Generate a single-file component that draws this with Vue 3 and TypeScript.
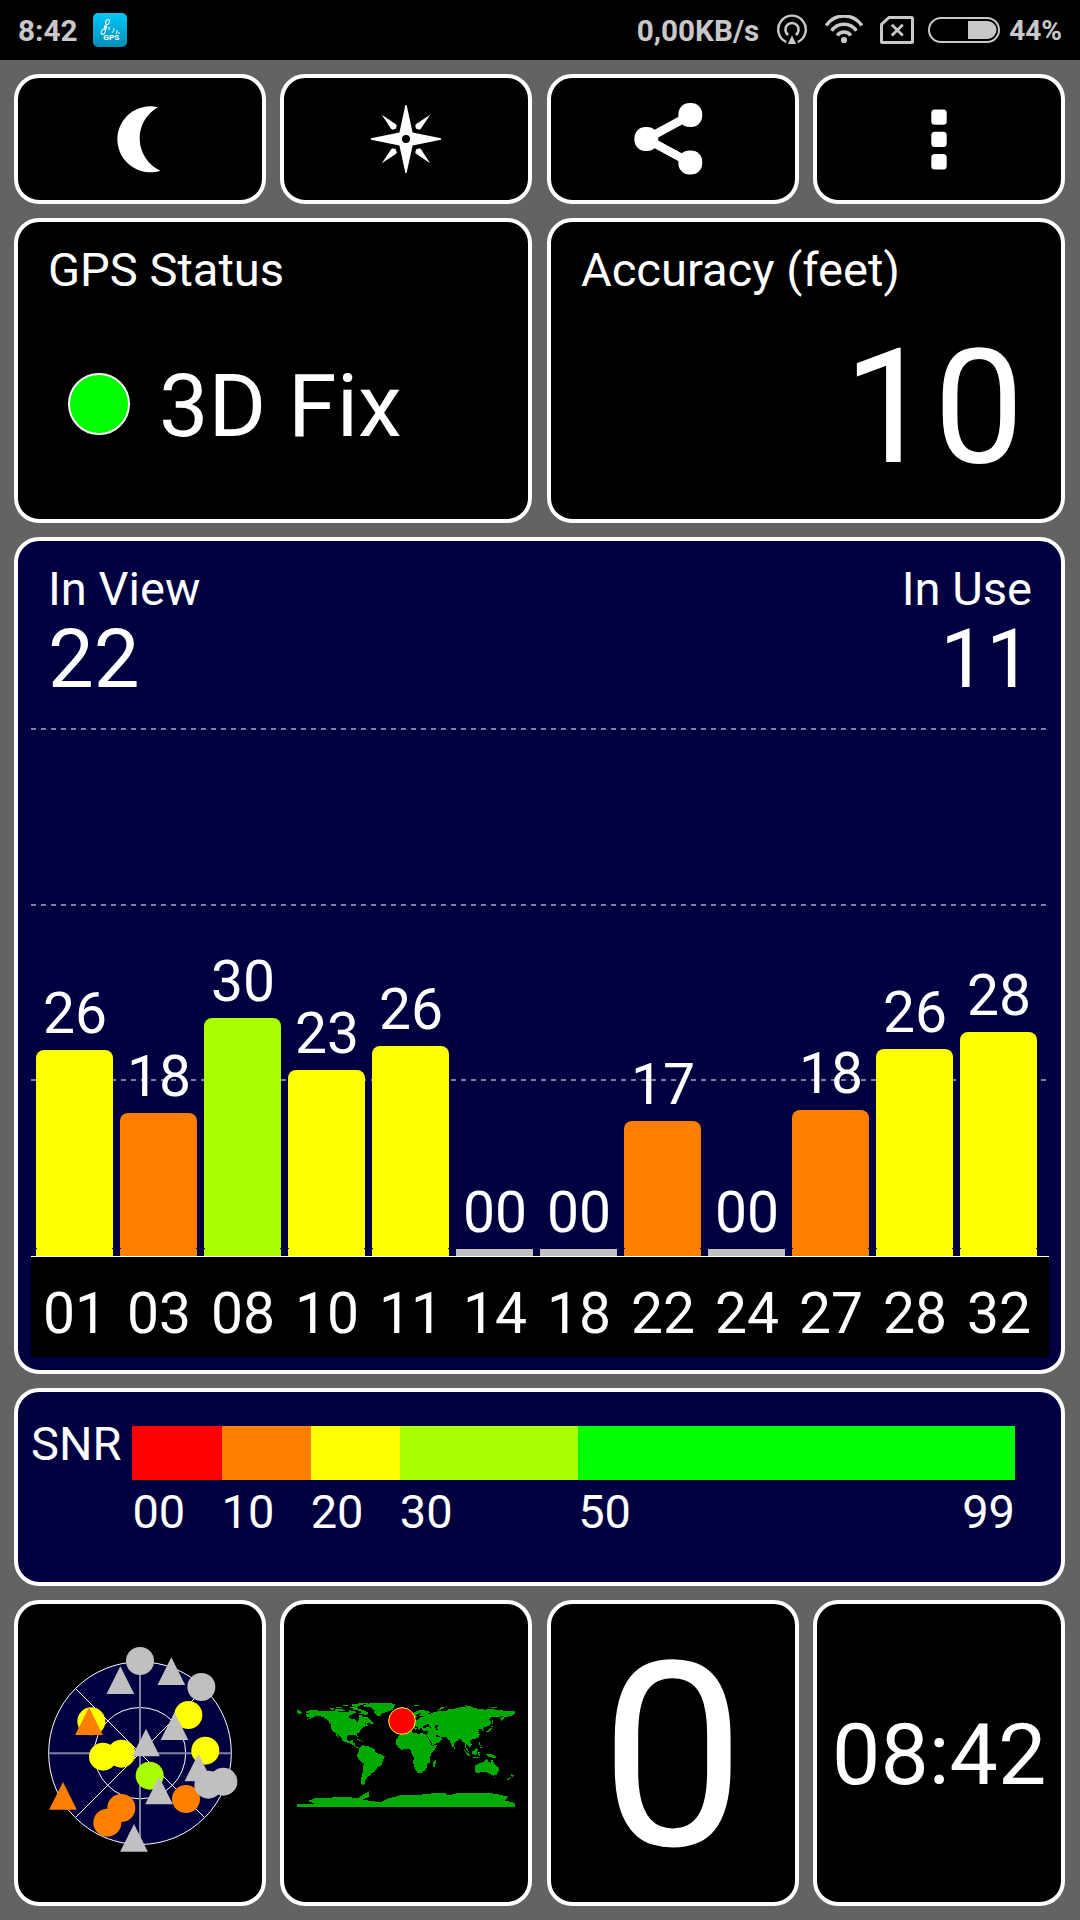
<script setup lang="ts">
interface Satellite {
  id: string
  snr: string
  height: number
  color: string
}

const YELLOW = '#ffff00'
const ORANGE = '#ff8000'
const LIME = '#aaff00'
const GREY = '#c0c0c0'

const satellites: Satellite[] = [
  { id: '01', snr: '26', height: 206, color: YELLOW },
  { id: '03', snr: '18', height: 143, color: ORANGE },
  { id: '08', snr: '30', height: 238, color: LIME },
  { id: '10', snr: '23', height: 186, color: YELLOW },
  { id: '11', snr: '26', height: 210, color: YELLOW },
  { id: '14', snr: '00', height: 7, color: GREY },
  { id: '18', snr: '00', height: 7, color: GREY },
  { id: '22', snr: '17', height: 135, color: ORANGE },
  { id: '24', snr: '00', height: 7, color: GREY },
  { id: '27', snr: '18', height: 146, color: ORANGE },
  { id: '28', snr: '26', height: 207, color: YELLOW },
  { id: '32', snr: '28', height: 224, color: YELLOW },
]

const snrScale = [
  { from: '00', color: '#ff0000' },
  { from: '10', color: ORANGE },
  { from: '20', color: YELLOW },
  { from: '30', color: LIME },
  { from: '50', to: '99', color: '#00ff00' },
]

type SkyMark = { shape: 'circle' | 'triangle'; x: number; y: number; color: string }

const skyMarks: SkyMark[] = [
  { shape: 'circle', x: 330, y: 63, color: GREY },
  { shape: 'circle', x: 514, y: 141, color: GREY },
  { shape: 'circle', x: 184, y: 244, color: YELLOW },
  { shape: 'circle', x: 475, y: 225, color: YELLOW },
  { shape: 'circle', x: 526, y: 332, color: YELLOW },
  { shape: 'circle', x: 219, y: 350, color: YELLOW },
  { shape: 'circle', x: 274, y: 341, color: YELLOW },
  { shape: 'circle', x: 359, y: 407, color: LIME },
  { shape: 'circle', x: 468, y: 477, color: ORANGE },
  { shape: 'circle', x: 274, y: 504, color: ORANGE },
  { shape: 'circle', x: 232, y: 548, color: ORANGE },
  { shape: 'circle', x: 535, y: 434, color: GREY },
  { shape: 'circle', x: 580, y: 425, color: GREY },
  { shape: 'triangle', x: 271, y: 79, color: GREY },
  { shape: 'triangle', x: 424, y: 52, color: GREY },
  { shape: 'triangle', x: 177, y: 202, color: ORANGE },
  { shape: 'triangle', x: 433.5, y: 217, color: GREY },
  { shape: 'triangle', x: 348, y: 266, color: GREY },
  { shape: 'triangle', x: 99, y: 426, color: ORANGE },
  { shape: 'triangle', x: 505, y: 341, color: GREY },
  { shape: 'triangle', x: 387, y: 410, color: GREY },
  { shape: 'triangle', x: 312, y: 552, color: GREY },
]

// Coastlines as longitude,latitude pairs.
const land: string[] = [
  '-168,66 -163,67 -166,68.5 -156,71 -141,69.6 -128,70 -115,68.5 -108,68 -95,68 -94,72 -90,69 -85,69.5 -82,67 -87,64.5 -94,61 -94.5,58.5 -92,57 -85,55.5 -82,53 -80,51.5 -79,54 -77,56 -78,60 -78,62.5 -73,62 -69,59 -65,60 -61,56 -56,52 -60,50 -66,50 -70,47 -65,48.5 -64,46 -60,46 -66,43.5 -70,43 -71,41.5 -75,39 -76,35 -81,31.5 -80,26 -82,28 -84,30 -89,30 -94,29.5 -97,27 -97.5,22 -95,18.5 -91,18.5 -90,21 -87,21.5 -88.5,16 -84,15.5 -83.5,11 -81,9 -78,9.5 -77,8 -80,7.5 -83,8.5 -86,11 -88,13 -94,16 -101,17.5 -105,20 -106,23 -112,29 -114.5,31.5 -112,27 -110,23 -115,28 -117,33 -121,35 -124,40 -124,47 -130,54 -135,58 -140,60 -147,61 -151,59.5 -157,56.5 -164,54.5 -158,58.5 -162,59 -165,61 -165,64 -161,65',
  '-72,78 -60,82 -45,82.5 -30,83 -18,80.5 -20,75 -22,71 -30,68.5 -40,65 -43,60 -49,62 -53,67 -52,70 -58,75 -68,76',
  '-88,73.5 -80,73.5 -70,70.5 -62,66.5 -66,62.5 -72,64 -78,65 -73,67.5 -79,70 -88,71',
  '-117,73 -105,73 -101,69.5 -112,68.5 -117,70',
  '-125,74 -118,74.5 -120,71 -125,72',
  '-90,80 -75,82.5 -62,82 -75,79 -80,76 -90,77',
  '-95,76.5 -80,75.5 -82,74.5 -92,74.5',
  '-117,76 -105,76 -107,74.7 -115,75',
  '-104,79 -96,80 -96,78 -103,77.5',
  '-100,73.5 -96,73 -98,71.5',
  '-59,50.5 -56,51.5 -53,48 -59,47.5',
  '-85,22 -80,23 -74,20 -78,20 -82,22',
  '-74,20 -68,19 -72,18',
  '-77,8 -72,12 -62,10.5 -52,5.5 -50,0 -44,-2.5 -35,-6 -38,-13 -40,-21 -47,-24.5 -49,-28 -53,-33 -58,-35 -57,-38 -62,-39 -65,-43 -67,-46 -68,-51 -69,-55 -74,-53 -75,-46 -73,-38 -71,-30 -70,-18 -76,-14 -81,-6 -80,-2 -77,4',
  '-6,35.5 10,37 11,33.5 20,31 25,32 33,31 35,27 38,20 43,11.5 51,12 48,5 41,-2 40,-10 40,-16 35,-20 35,-25 32,-29 26,-34 19,-34.5 15,-27 12,-17 13,-8 9,-1 9,4 4,6.5 -8,4.5 -13,8.5 -17,14.5 -16,22 -10,30',
  '44,-17 49.5,-12 50,-16 47,-25 44,-24',
  '-9,37 -9,43 -2,43.5 -1,46 -4,48.5 2,51 8,54 9,57 11,54 20,54.5 24,59 29,60 22,60.5 22,63 25,65.5 22,66 17,62 18,59.5 14,55.5 11,59 5,59 6,62 14,67 20,70 28,71 40,68 40,66 33,66.5 38,64 44,66 46,68 55,68.5 68,69 70,73 80,73 90,75.5 105,77.5 113,74 130,71.5 140,72.5 160,70 170,70 180,69 180,65 177,62.5 170,60 163,59 162,56 157,51 156,57 163,62 155,59.5 142,59 136,54.5 140,53 140,48 135,43.5 130,42.5 127,39.5 129,36 127,34.5 126,38 121,39.5 118,39 122,37 119,35 122,31 120,26 115,22.5 108,21.5 106,19 109,13 105,9 100,13.5 99,9 103,5 103.5,1.5 101,3 98,9 98,16 94,17 91,22.5 87,21.5 80,15.5 80,12 77.5,8 74,14 73,20 70,21 67,25 57,26.5 50,30 48,29.5 51,25 56,26 60,22.5 55,17 44,12.5 39,21 35,28 36,36 28,36.5 26,40 35,42 42,41.5 37,47 31,46 28,44 28,41 23,40 22,37 19,42 13,45.5 16,41 18,40 16,38 10,44 3,43 0,40 -2,37 -5,36',
  '12,79.5 25,80 20,77.5 15,77.5',
  '52,71 57,71 68,77 58,75',
  '95,80 105,79 98,78',
  '138,75.5 150,75 143,74',
  '130,33 132,34 136,34 140,36 142,40 140,41 136,37',
  '140,42 145,43.5 142,45.5',
  '142,46 144,50 143,54 142,50',
  '120,23 122,25 121,22',
  '120,18 122,18 122,14 124,12 126,7 122,7 124,10 120,14',
  '95,5.5 104,-2 106,-6 102,-5',
  '105,-6.5 115,-8 124,-8.5 124,-9.5 114,-9 106,-7.5',
  '109,1.5 117,7 119,5 116,-4 110,-3',
  '120,1 125,1.5 121,-1 123,-5 120,-5 119,-2',
  '131,-1 135,-3.5 141,-2.5 148,-6 150,-10 143,-8.5 138,-8 133,-4',
  '80,9 82,7 80,6',
  '114,-22 122,-18 129,-15 132,-11.5 136,-12 136,-15 140,-17.5 142,-11 146,-19 153,-25 153,-31 150,-37.5 144,-38.5 139,-36 136,-34 131,-31.5 124,-33 118,-35 115,-34',
  '145,-41 148,-41 147,-43.5',
  '173,-35 178,-38 175,-41.5 174,-39',
  '172.5,-41 174,-42 168,-46.5 167,-45',
]
</script>

<template>
  <div class="screen">
    <header class="status">
      <span class="clock">8:42</span>
      <svg class="app" width="34" height="34" viewBox="0 0 34 34">
        <defs>
          <linearGradient id="sky" x1="0" y1="0" x2="0" y2="1">
            <stop offset="0" stop-color="#00c8f8" />
            <stop offset="1" stop-color="#008fb8" />
          </linearGradient>
        </defs>
        <rect width="34" height="34" rx="5" fill="url(#sky)" />
        <g fill="none" stroke="#fff" stroke-width="1">
          <ellipse cx="14.5" cy="9" rx="1.8" ry="2.6" transform="rotate(20 14.5 9)" />
          <ellipse cx="10.3" cy="18.7" rx="1.8" ry="2.8" transform="rotate(25 10.3 18.7)" />
          <path d="M12 12l2 2-2 3M19 20q2.200-2 2-5M23 21q1.500-2 1-4M26 21v-2M16 14v3" />
        </g>
        <circle cx="12.500" cy="14" r="1.800" fill="#fff" />
        <text x="18.300" y="27.300" text-anchor="middle" class="app-text" textLength="16" lengthAdjust="spacingAndGlyphs">GPS</text>
      </svg>
      <span class="grow"></span>
      <span class="rate">0,00KB/s</span>
      <svg class="hotspot" width="32" height="32" viewBox="0 0 32 32" fill="none" stroke="#c8c8c8">
        <path d="M10.300 28A13.800 13.800 0 1 1 21.700 28" stroke-width="2.400" />
        <path d="M12.200 21A6.600 6.600 0 1 1 19.800 21" stroke-width="2.600" />
        <path d="M16 21.500L20.200 30H11.800Z" fill="#c8c8c8" stroke="none" />
      </svg>
      <svg class="wifi" width="40" height="30" viewBox="0 0 40 30" fill="none" stroke="#c8c8c8" stroke-width="3.400">
        <path d="M2.200 10.500A21.500 21.500 0 0 1 37.800 10.500" />
        <path d="M7.600 15.800A15 15 0 0 1 32.400 15.800" />
        <path d="M13.200 20.400A8.500 8.500 0 0 1 26.800 20.400" />
        <circle cx="20" cy="25" r="3.100" fill="#c8c8c8" stroke="none" />
      </svg>
      <svg class="sim" width="34" height="28" viewBox="0 0 34 28" fill="none" stroke="#c8c8c8">
        <path d="M9 1.500H31.500a1 1 0 0 1 1 1V25.500a1 1 0 0 1-1 1H2.500a1 1 0 0 1-1-1V8.500Z" stroke-width="3" />
        <path d="M11.800 8.700L22.800 19.600M22.800 8.700L11.800 19.600" stroke-width="2.800" />
      </svg>
      <svg class="battery" width="72" height="26" viewBox="0 0 72 26">
        <rect x="1" y="1" width="70" height="24" rx="12" fill="none" stroke="#c8c8c8" stroke-width="2" />
        <path d="M40 4H59.500a9 9 0 0 1 0 18H40Z" fill="#c8c8c8" />
      </svg>
      <span class="percent">44%</span>
    </header>

    <main class="board">
      <div class="row tools">
        <button class="card" aria-label="Night mode">
          <svg width="90" height="90" viewBox="95 94 90 90" fill="#fff">
            <path d="M158 107.200A33 33 0 1 0 160.500 170.700A35.600 35.600 0 0 1 158 107.200Z" />
          </svg>
        </button>
        <button class="card" aria-label="Compass">
          <svg width="90" height="90" viewBox="-45 -45 90 90" fill="#fff">
            <path fill-rule="evenodd" d="M-.6-34H.6L6.600-6.400L35-.7V.7L6.600 6.400L.6 34H-.6L-6.600 6.400L-35 .7V-.7L-6.600-6.400ZM-4 0A4 4 0 1 0 4 0A4 4 0 1 0-4 0Z" />
            <path v-for="a in [0, 90, 180, 270]" :key="a" :transform="`rotate(${a})`" d="M-24.200-24.200L-10.500-15L-9.200-13.500L-10.200-10.200L-13.500-9.200L-15-10.200Z" />
          </svg>
        </button>
        <button class="card" aria-label="Share">
          <svg width="90" height="90" viewBox="627.500 94 90 90" fill="#fff" stroke="#fff">
            <path d="M689.800 115.300L646 139L689.800 162.700" fill="none" stroke-width="8.500" />
            <g stroke="none">
              <rect x="677.900" y="103" width="23.800" height="24" rx="11" />
              <rect x="633.900" y="127" width="23.800" height="24" rx="11" />
              <rect x="677.900" y="150.500" width="23.800" height="24" rx="11" />
            </g>
          </svg>
        </button>
        <button class="card" aria-label="Menu">
          <svg width="90" height="90" viewBox="894 94 90 90" fill="#fff">
            <rect x="931.300" y="109.400" width="15.400" height="15.300" rx="3.500" />
            <rect x="931.300" y="131.800" width="15.400" height="15.300" rx="3.500" />
            <rect x="931.300" y="154.100" width="15.400" height="15.300" rx="3.500" />
          </svg>
        </button>
      </div>

      <div class="row stats">
        <section class="card stat">
          <div class="title">GPS Status</div>
          <div class="fix"><i class="lamp"></i><span>3D Fix</span></div>
        </section>
        <section class="card stat">
          <div class="title">Accuracy (feet)</div>
          <div class="accuracy">10</div>
        </section>
      </div>

      <section class="card sats">
        <div class="counts">
          <div>
            <div class="title">In View</div>
            <div class="count">22</div>
          </div>
          <div class="used">
            <div class="title">In Use</div>
            <div class="count">11</div>
          </div>
        </div>
        <div class="plot">
          <svg class="lines" width="1018" height="528" viewBox="0 0 1018 528">
            <path d="M0 1H1016M0 177H1016M0 352H1016" stroke="#8080a0" stroke-width="2" stroke-dasharray="5 5" />
          </svg>
          <div v-for="s in satellites" :key="s.id" class="sat">
            <span class="level">{{ s.snr }}</span>
            <div class="bar" :class="{ flat: s.snr === '00' }" :style="{ height: s.height + 'px', background: s.color }"></div>
          </div>
        </div>
        <div class="ids">
          <span v-for="s in satellites" :key="s.id">{{ s.id }}</span>
        </div>
      </section>

      <section class="card snr">
        <span class="snr-name">SNR</span>
        <div class="scale">
          <div v-for="seg in snrScale" :key="seg.from">
            <div class="swatch" :style="{ background: seg.color }"></div>
            <div class="ticks"><span>{{ seg.from }}</span><span v-if="seg.to">{{ seg.to }}</span></div>
          </div>
        </div>
      </section>

      <div class="row tiles">
        <section class="card sky">
          <svg width="220" height="230" viewBox="0 0 660 690">
            <circle cx="330" cy="339.500" r="274" fill="#000040" stroke="#fff" stroke-width="3" />
            <circle cx="330" cy="339.500" r="137" fill="none" stroke="#fff" stroke-width="3" />
            <path d="M330 66V613M56 339.500H604" stroke="#8080a0" stroke-width="6" />
            <path d="M137 146L523 532M523 146L137 532" stroke="#fff" stroke-width="3" />
            <template v-for="(m, i) in skyMarks" :key="i">
              <circle v-if="m.shape === 'circle'" :cx="m.x" :cy="m.y" r="42" :fill="m.color" />
              <polygon v-else :points="`${m.x},${m.y} ${m.x + 41.5},${m.y + 83} ${m.x - 41.5},${m.y + 83}`" :fill="m.color" />
            </template>
          </svg>
        </section>
        <section class="card map">
          <svg width="240" height="130" viewBox="0 0 720 390">
            <g fill="#00aa00" shape-rendering="crispEdges">
              <g transform="translate(363 187.500) scale(1.815 -1.800)">
                <polygon v-for="(p, i) in land" :key="i" :points="p" />
                <polygon points="50,46 53,45 51,41 54,37 50,37.500 49,41 47,44" fill="#000" />
              </g>
              <path d="M36 58L52 66L46 72L36 70Z" />
              <path d="M36 343L88 341L70 333L88 325L115 324L150 322L180 322L222 323L235 313L257 302L250 312L256 320L232 328L262 334L290 336L305 327L345 316L400 315L450 309L480 308L490 316L520 309L560 310L600 308L630 311L655 317L670 318L660 332L690 339V350H36Z" />
            </g>
            <circle cx="351" cy="93" r="40" fill="#f00" stroke="#ff0" stroke-width="3" />
          </svg>
        </section>
        <section class="card speed">0</section>
        <section class="card time">08:42</section>
      </div>
    </main>
  </div>
</template>

<style>
body {
  margin: 0;
  background: #636363;
}
</style>

<style scoped>
.screen {
  width: 1080px;
  height: 1920px;
  overflow: hidden;
  background: #636363;
  color: #fff;
  font-family: Roboto, 'Liberation Sans', sans-serif;
  font-size: 47px;
  line-height: 56px;
}
.screen * {
  box-sizing: border-box;
}
svg {
  display: block;
  flex: none;
}
.status {
  height: 60px;
  padding: 0 18px 0 18px;
  display: flex;
  align-items: center;
  background: #000;
  color: #c8c8c8;
  font-weight: 700;
  font-size: 29.7px;
  line-height: 61px;
}
.clock {
  width: 75px;
}
.app-text {
  font: 700 6.5px Roboto, sans-serif;
  fill: #fff;
}
.grow {
  flex: 1;
}
.hotspot {
  margin-left: 17px;
}
.wifi {
  margin-left: 16px;
}
.sim {
  margin-left: 16px;
}
.battery {
  margin-left: 14px;
}
.percent {
  margin-left: 9px;
  font-size: 28px;
}
.board {
  height: 1860px;
  padding: 14px 15px 14px 14px;
  display: flex;
  flex-direction: column;
  gap: 14px;
}
.row {
  display: flex;
  gap: 14.8px;
}
.card {
  margin: 0;
  flex: 1 1 0;
  min-width: 0;
  border: 4px solid #fff;
  border-radius: 25px;
  background: #000;
  color: inherit;
}
.tools {
  height: 130px;
}
.tools .card,
.tiles .card {
  padding: 0;
  display: flex;
  align-items: center;
  justify-content: center;
}
.stats {
  height: 305px;
}
.stat {
  padding: 20px 37px 0 30px;
  white-space: nowrap;
}
.title {
  font-size: 47.1px;
}
.fix {
  margin: 58px 0 0 20px;
  display: flex;
  align-items: center;
  gap: 29px;
  font-size: 88px;
  line-height: 100px;
}
.lamp {
  width: 62px;
  height: 62px;
  margin-bottom: 4px;
  border: 2px solid #fff;
  border-radius: 50%;
  background: #0f0;
}
.accuracy {
  margin-top: 29.2px;
  text-align: right;
  font-size: 160.5px;
  line-height: 160px;
}
.sats {
  flex: none;
  height: 837px;
  padding: 20px 12px 0 13px;
  background: #000040;
}
.counts {
  padding: 0 17px;
  display: flex;
  justify-content: space-between;
}
.used {
  text-align: right;
}
.count {
  margin-top: 2px;
  font-size: 81.5px;
  line-height: 80px;
}
.plot {
  position: relative;
  height: 529px;
  margin-top: 29px;
  padding-left: 5px;
  display: flex;
  align-items: flex-end;
  gap: 7px;
  border-bottom: 1px solid #fff;
}
.lines {
  position: absolute;
  left: 0;
  top: 0;
}
.sat {
  position: relative;
  width: 77px;
}
.level {
  display: block;
  margin-bottom: 6px;
  padding-left: 1px;
  text-align: center;
  font-size: 57px;
  line-height: 60px;
}
.bar {
  display: flex;
  align-items: flex-end;
  border-radius: 8px 8px 0 0;
}
/* One-pixel notches on both edges, just above the base line. */
.bar::after {
  content: '';
  width: 100%;
  height: 1px;
  margin-bottom: 7px;
  border: solid #000040;
  border-width: 0 1px;
}
.bar.flat {
  border-radius: 0;
}
.bar.flat::after {
  display: none;
}
.ids {
  height: 100px;
  padding: 6.5px 0 0 5px;
  display: flex;
  gap: 7px;
  background: #000;
  font-size: 57px;
  line-height: 100px;
}
.ids span {
  width: 77px;
  height: 93px;
  padding-left: 1px;
  text-align: center;
}
.snr {
  flex: none;
  height: 198px;
  padding: 24px 46px 0 13px;
  display: flex;
  background: #000040;
}
.snr-name {
  width: 101.4px;
  flex: none;
}
.scale {
  flex: 1;
  margin-top: 9.7px;
  display: grid;
  grid-template-columns: 10fr 10fr 10fr 20fr 49fr;
}
.swatch {
  height: 54px;
}
.ticks {
  margin-top: 4.5px;
  display: flex;
  justify-content: space-between;
}
.tiles {
  height: 306px;
}
.sky svg {
  margin-top: 4px;
}
.map svg {
  margin: 4px 2.6px 0 0;
}
.tiles .speed {
  padding-top: 8px;
  font-size: 257.8px;
  line-height: 259px;
}
.tiles .time {
  padding-top: 3px;
  font-size: 86px;
  line-height: 100px;
}
</style>
